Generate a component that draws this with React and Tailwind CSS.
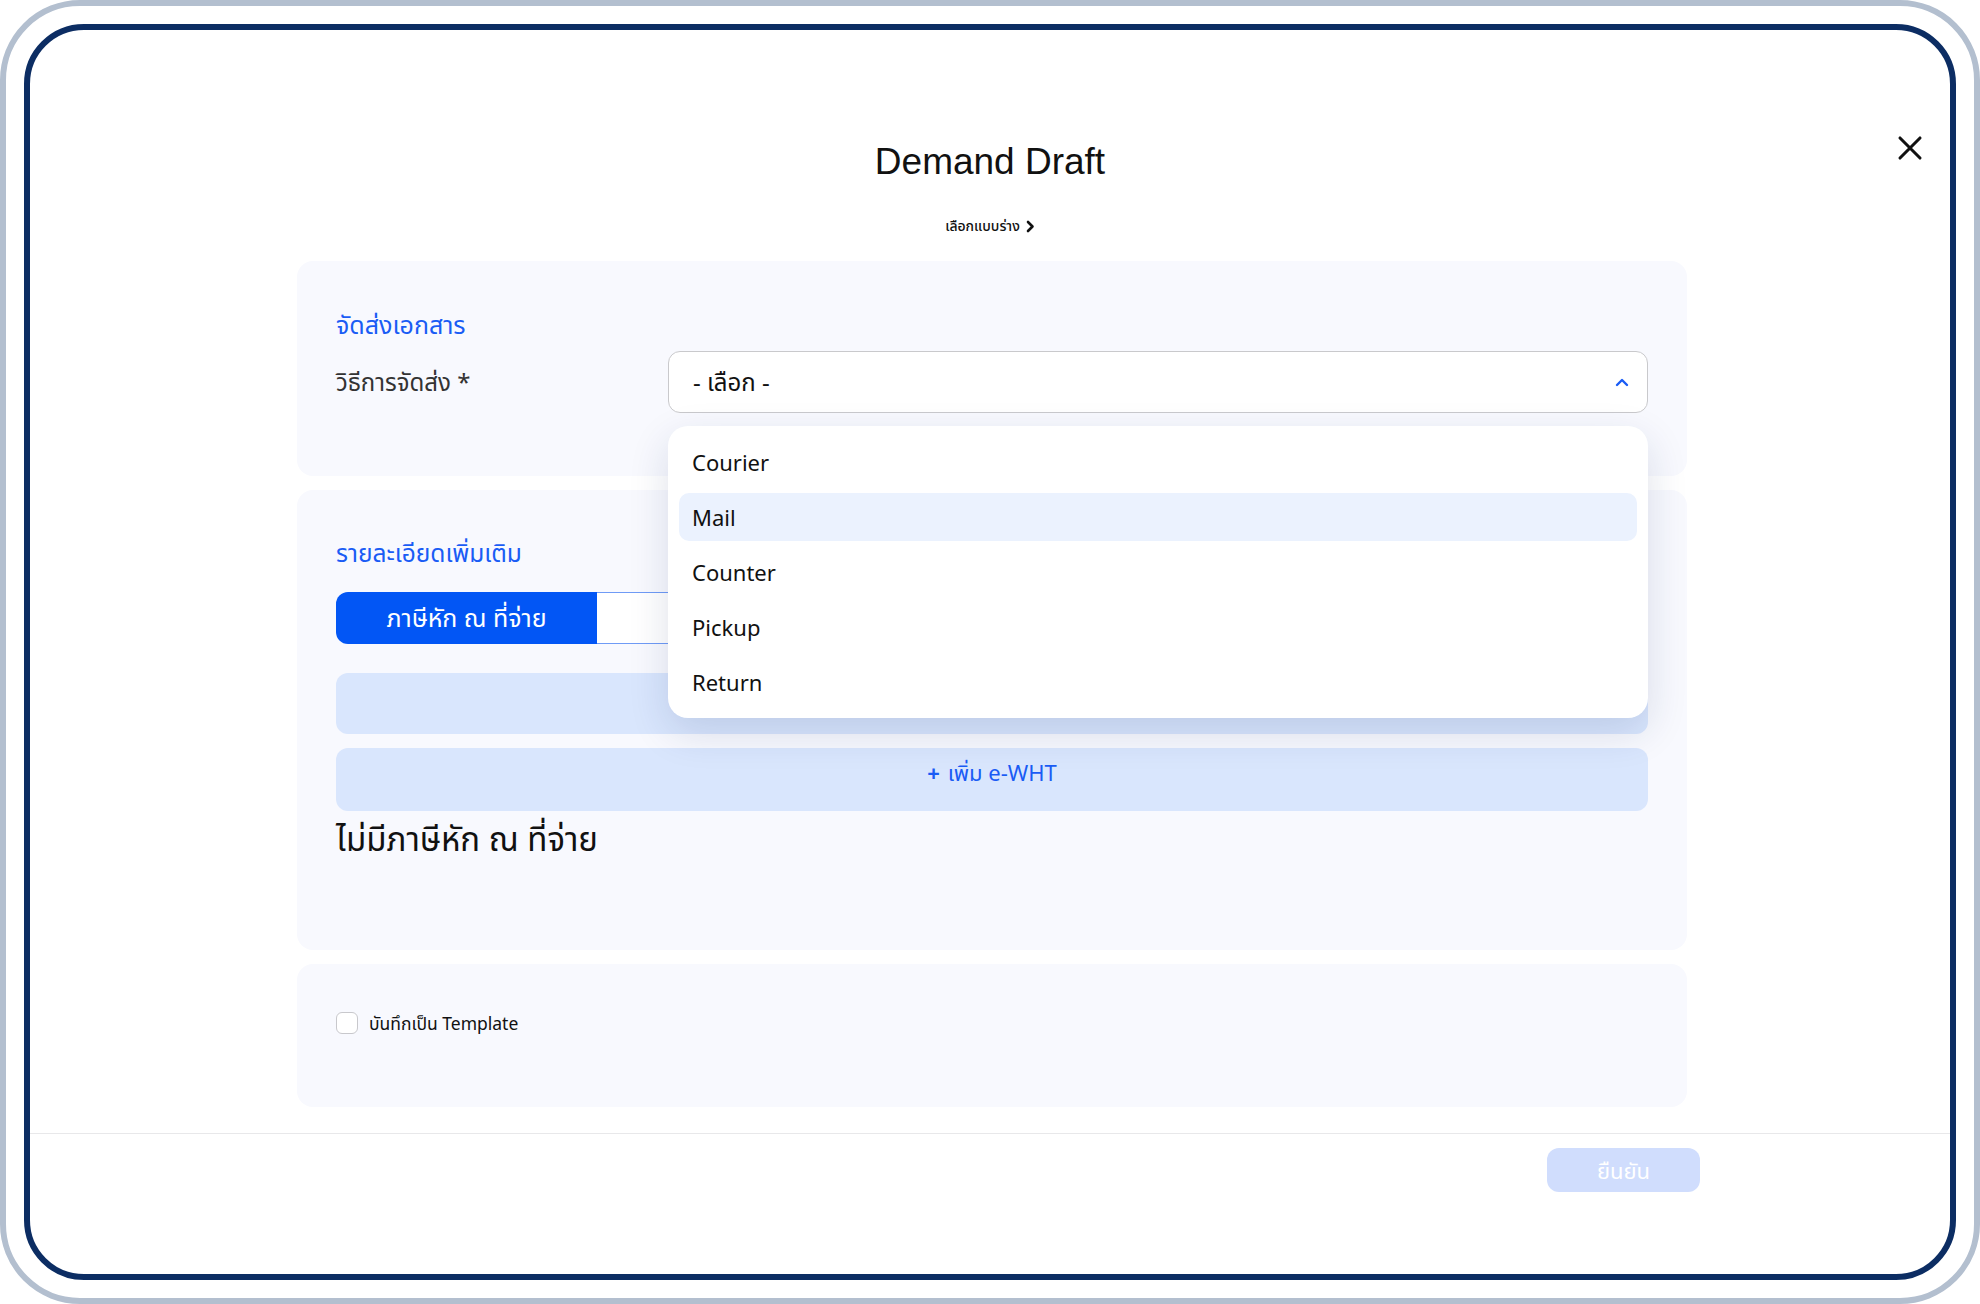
// Demand Draft — delivery form modal with open select dropdown
const FONT = "font-['Noto_Sans','Noto_Sans_Thai','Liberation_Sans','Noto_Sans_CJK_SC',sans-serif]"

const OPTIONS = ['Courier', 'Mail', 'Counter', 'Pickup', 'Return']

function CloseIcon() {
  return (
    <svg width="32" height="32" viewBox="0 0 24 24" fill="none" stroke="#111" strokeWidth="2.3" strokeLinecap="round">
      <path d="M4.5 4.5l15 15M19.5 4.5l-15 15" />
    </svg>
  )
}

function ChevronUp() {
  return (
    <svg width="14" height="9" viewBox="0 0 14 9" fill="none" stroke="#1a5cf5" strokeWidth="2.4" strokeLinecap="round" strokeLinejoin="round">
      <path d="M2 7l5-5 5 5" />
    </svg>
  )
}

function ChevronRight() {
  return (
    <svg width="9" height="13" viewBox="0 0 9 13" fill="none" stroke="#111" strokeWidth="2.6" strokeLinecap="round" strokeLinejoin="round">
      <path d="M2 2l4.5 4.5L2 11" />
    </svg>
  )
}

function DeliverySelect() {
  return (
    <div className="relative flex-1">
      <div className="h-[62px] rounded-[12px] border border-[#c9c9cc] bg-white flex items-center justify-between pl-[24px] pr-[18px]">
        <span className="text-[24px] text-[#111]">- เลือก -</span>
        <ChevronUp />
      </div>
      <div className="absolute left-0 right-0 top-[75px] z-10 bg-white rounded-[20px] shadow-[0_14px_40px_rgba(20,45,100,0.14)] px-[11px] py-[12px] flex flex-col gap-[7px]">
        {OPTIONS.map(o => (
          <div key={o} className={`h-[48px] rounded-[10px] flex items-center px-[13px] text-[22px] text-[#111] ${o === 'Mail' ? 'bg-[#ebf2fe]' : ''}`}>
            {o}
          </div>
        ))}
      </div>
    </div>
  )
}

export default function App() {
  return (
    <div className={`w-[1980px] h-[1304px] bg-white ${FONT}`}>
      <div className="w-full h-full rounded-[80px] border-[6px] border-[#b3bfcf] p-[18px]">
        <div className="w-full h-full rounded-[60px] border-[6px] border-[#0c2d63] flex flex-col overflow-hidden">
          {/* header */}
          <div className="grid grid-cols-[1fr_auto_1fr] pt-[110px]">
            <div />
            <div className="flex flex-col items-center">
              <h1 className="text-[37px] leading-[44px] text-[#111] font-['Liberation_Sans','Noto_Sans',sans-serif]">Demand Draft</h1>
              <button className="mt-[32px] flex items-center gap-[6px] text-[14px] leading-[20px] font-medium text-[#111]">
                เลือกแบบร่าง <ChevronRight />
              </button>
            </div>
            <div className="flex justify-end pr-[24px]">
              <button className="h-[32px] -mt-[8px]"><CloseIcon /></button>
            </div>
          </div>

          {/* body */}
          <div className="w-[1390px] ml-[267px] mt-[25px] flex flex-col gap-[14px]">
            <div className="bg-[#f8f9fe] rounded-[16px] px-[39px] pt-[47px] pb-[63px] relative z-10">
              <div className="text-[25px] leading-[32px] text-[#1a5cf5]">จัดส่งเอกสาร</div>
              <div className="mt-[11px] flex items-center">
                <div className="w-[332px] text-[24px] text-[#333]">วิธีการจัดส่ง *</div>
                <DeliverySelect />
              </div>
            </div>

            <div className="bg-[#f8f9fe] rounded-[16px] px-[39px] pt-[47px] h-[460px]">
              <div className="text-[24.5px] leading-[32px] text-[#1a5cf5]">รายละเอียดเพิ่มเติม</div>
              <div className="mt-[23px] flex h-[52px]">
                <div className="w-[261px] rounded-l-[12px] bg-[#0256f5] text-white text-[25px] flex items-center justify-center">ภาษีหัก ณ ที่จ่าย</div>
                <div className="w-[261px] rounded-r-[12px] bg-white border border-l-0 border-[#6f9bf6]" />
              </div>
              <div className="mt-[29px] h-[61px] rounded-[12px] bg-[#d9e6fd]" />
              <button className="mt-[14px] w-full h-[63px] rounded-[12px] bg-[#d9e6fd] text-[22px] text-[#1a5cf5] flex items-center justify-center gap-[8px] pb-[14px]">
                <span className="font-bold">+</span> เพิ่ม e-WHT
              </button>
              <div className="mt-[8px] text-[33px] leading-[40px] text-[#111]">ไม่มีภาษีหัก ณ ที่จ่าย</div>
            </div>

            <div className="bg-[#f8f9fe] rounded-[16px] px-[39px] pt-[46px] h-[143px]">
              <label className="flex items-center gap-[11px]">
                <span className="w-[22px] h-[22px] rounded-[6px] border border-[#c8c8cc] bg-white" />
                <span className="text-[17.5px] text-[#111]">บันทึกเป็น Template</span>
              </label>
            </div>
          </div>

          {/* footer */}
          <div className="mt-[26px] border-t border-[#e8e8ea] pt-[14px] flex justify-end pr-[250px]">
            <button className="w-[153px] h-[44px] rounded-[12px] bg-[#d0ddfd] text-white text-[22px]">ยืนยัน</button>
          </div>
        </div>
      </div>
    </div>
  )
}
